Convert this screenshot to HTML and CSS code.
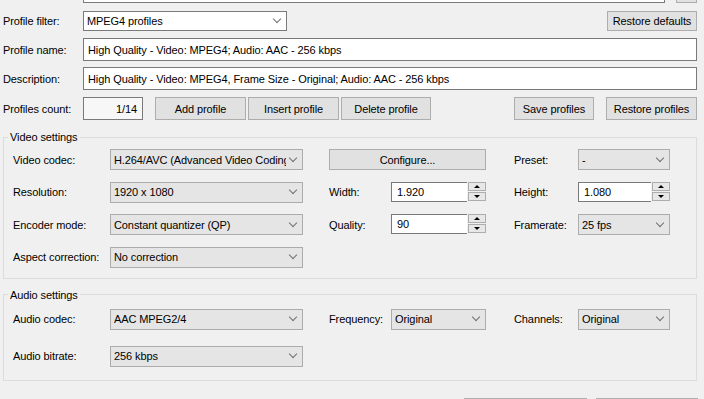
FILE: index.html
```html
<!DOCTYPE html>
<html lang="en">
<head>
    <meta charset="UTF-8">
    <meta name="viewport" content="width=device-width, initial-scale=1.0">
    <title>Profile settings</title>
    <link rel="stylesheet" href="styles.css">
</head>
<body>
    <div class="dialog">
        <!-- Row above, scrolled almost out of view -->
        <div class="row row-cut">
            <div class="edit edit-cut">High Quality - Video: MPEG4; Audio: AAC - 128 kbps (cropped)</div>
            <button class="btn btn-tiny"></button>
        </div>

        <div class="row row-filter">
            <span class="label">Profile filter:</span>
            <div class="combo combo-white combo-filter"><span>MPEG4 profiles</span></div>
            <button class="btn btn-defaults">Restore defaults</button>
        </div>

        <div class="row row-name">
            <span class="label">Profile name:</span>
            <div class="edit">High Quality - Video: MPEG4; Audio: AAC - 256 kbps</div>
        </div>

        <div class="row row-desc">
            <span class="label">Description:</span>
            <div class="edit">High Quality - Video: MPEG4, Frame Size - Original; Audio: AAC - 256 kbps</div>
        </div>

        <div class="row row-count">
            <span class="label">Profiles count:</span>
            <div class="count">1/14</div>
            <button class="btn btn-add">Add profile</button>
            <button class="btn btn-insert">Insert profile</button>
            <button class="btn btn-delete">Delete profile</button>
            <button class="btn btn-save">Save profiles</button>
            <button class="btn btn-restore">Restore profiles</button>
        </div>

        <!-- Video settings -->
        <fieldset class="group video">
            <legend>Video settings</legend>
            <div class="grid">
                <span>Video codec:</span>
                <div class="combo"><span>H.264/AVC (Advanced Video Coding)</span></div>
                <button class="btn btn-configure">Configure...</button>
                <span class="lbl-right">Preset:</span>
                <div class="combo"><span>-</span></div>

                <span>Resolution:</span>
                <div class="combo"><span>1920 x 1080</span></div>
                <span class="lbl-mid">Width:</span>
                <div class="spin">
                    <div class="spin-text">1.920</div>
                    <div class="spin-btns"><div class="spin-up"></div><div class="spin-down"></div></div>
                </div>
                <span class="lbl-right">Height:</span>
                <div class="spin">
                    <div class="spin-text">1.080</div>
                    <div class="spin-btns"><div class="spin-up"></div><div class="spin-down"></div></div>
                </div>

                <span>Encoder mode:</span>
                <div class="combo"><span>Constant quantizer (QP)</span></div>
                <span class="lbl-mid">Quality:</span>
                <div class="spin">
                    <div class="spin-text">90</div>
                    <div class="spin-btns"><div class="spin-up"></div><div class="spin-down"></div></div>
                </div>
                <span class="lbl-right">Framerate:</span>
                <div class="combo"><span>25 fps</span></div>

                <span>Aspect correction:</span>
                <div class="combo"><span>No correction</span></div>
            </div>
        </fieldset>

        <!-- Audio settings -->
        <fieldset class="group audio">
            <legend>Audio settings</legend>
            <div class="grid">
                <span>Audio codec:</span>
                <div class="combo"><span>AAC MPEG2/4</span></div>
                <span class="lbl-mid">Frequency:</span>
                <div class="combo"><span>Original</span></div>
                <span class="lbl-right">Channels:</span>
                <div class="combo"><span>Original</span></div>

                <span>Audio bitrate:</span>
                <div class="combo"><span>256 kbps</span></div>
            </div>
        </fieldset>

        <!-- Dialog buttons, only their top edge is in view -->
        <div class="row row-bottom">
            <button class="btn btn-ok"></button>
            <button class="btn btn-cancel"></button>
        </div>
    </div>
</body>
</html>
```

FILE: styles.css
```css
body {
    margin: 0;
    background: #f0f0f0;
    font-family: "Liberation Sans", Arial, sans-serif;
    font-size: 11px;
    letter-spacing: -0.1px;
    color: #000;
}

.dialog {
    height: 399px;
    padding: 0 7px 0 3px;
    overflow: hidden;
}

.row {
    display: flex;
    align-items: center;
}

.label {
    width: 80px;
    flex-shrink: 0;
}

/* Text boxes */
.edit {
    flex: 1;
    height: 23px;
    box-sizing: border-box;
    display: flex;
    align-items: center;
    padding: 0 4px;
    background: #fff;
    border: 1px solid #7a7a7a;
    white-space: nowrap;
    overflow: hidden;
}

.row-cut {
    margin-top: -18px;
    align-items: flex-end;
}

.edit-cut {
    flex: none;
    width: 582px;
    height: 21px;
    margin-left: 80px;
}

.row-filter { margin-top: 8px; }
.row-name { margin-top: 7px; }
.row-desc { margin-top: 6px; }
.row-count { margin-top: 7px; }

/* Push buttons */
.btn {
    box-sizing: border-box;
    height: 23px;
    padding: 0;
    background: #e1e1e1;
    border: 1px solid #adadad;
    font: inherit;
    letter-spacing: inherit;
    color: #000;
}

.btn-tiny { width: 22px; height: 21px; margin-left: 11px; }
.btn-defaults { width: 90px; height: 20px; margin-left: auto; }
.btn-add { width: 91px; margin-left: 12px; }
.btn-insert { width: 91px; margin-left: 2px; }
.btn-delete { width: 90px; margin-left: 2px; }
.btn-save { width: 80px; margin-left: auto; }
.btn-restore { width: 91px; margin-left: 12px; }

.count {
    width: 60px;
    height: 23px;
    box-sizing: border-box;
    padding: 0 5px;
    display: flex;
    align-items: center;
    justify-content: flex-end;
    background: #f7f7f7;
    border: 1px solid #7a7a7a;
}

/* Drop-down lists */
.combo {
    height: 21px;
    box-sizing: border-box;
    display: flex;
    align-items: center;
    padding-left: 3px;
    background: #e5e5e5;
    border: 1px solid #acacac;
    overflow: hidden;
}

.combo span {
    flex: 1;
    white-space: nowrap;
    overflow: hidden;
}

.combo::after {
    content: "";
    width: 5px;
    height: 5px;
    margin: -4px 6px 0 4px;
    border-right: 1px solid #707070;
    border-bottom: 1px solid #707070;
    transform: rotate(45deg);
    flex-shrink: 0;
}

.combo-white {
    background: #fff;
    border-color: #7a7a7a;
}

.combo-filter {
    width: 204px;
    height: 20px;
}

/* Group boxes */
.group {
    margin: 10px 0 0;
    padding: 0 0 10px 9px;
    border: 1px solid #dcdcdc;
    min-width: 0;
}

.group legend {
    padding: 0 2px;
    margin-left: -5px;
    line-height: 14px;
}

.grid {
    display: grid;
    grid-template-columns: 97px 193px 88px 95px 92px 92px;
    grid-auto-rows: 21px;
    align-items: center;
}

.video .grid {
    padding-top: 5px;
    row-gap: 11.67px;
}

.audio {
    margin-top: 9px;
    padding-bottom: 13px;
}

.audio .grid {
    padding-top: 7px;
    row-gap: 16px;
}

.lbl-mid { padding-left: 26px; }
.lbl-right { padding-left: 28px; }

.btn-configure {
    grid-column: span 2;
    height: 21px;
    margin-left: 26px;
}

/* Spin boxes */
.spin {
    align-self: start;
    display: flex;
    height: 20px;
}

.spin-text {
    flex: 1;
    box-sizing: border-box;
    padding-left: 5px;
    display: flex;
    align-items: center;
    background: #fff;
    border: 1px solid #7a7a7a;
    border-right: none;
}

.spin-btns {
    width: 19px;
    display: flex;
    flex-direction: column;
    gap: 1px;
    padding: 0 0 1px 1px;
    box-sizing: border-box;
}

.spin-up,
.spin-down {
    flex: 1;
    display: flex;
    align-items: center;
    justify-content: center;
    background: #e7e7e7;
    border: 1px solid #adadad;
}

.spin-up::after {
    content: "";
    border-left: 3px solid transparent;
    border-right: 3px solid transparent;
    border-bottom: 3px solid #000;
}

.spin-down::after {
    content: "";
    border-left: 3px solid transparent;
    border-right: 3px solid transparent;
    border-top: 3px solid #000;
}

.row-bottom { margin-top: 17px; }
.btn-ok { width: 123px; margin-left: auto; }
.btn-cancel { width: 102px; margin-left: 9px; margin-right: -1px; }
```
